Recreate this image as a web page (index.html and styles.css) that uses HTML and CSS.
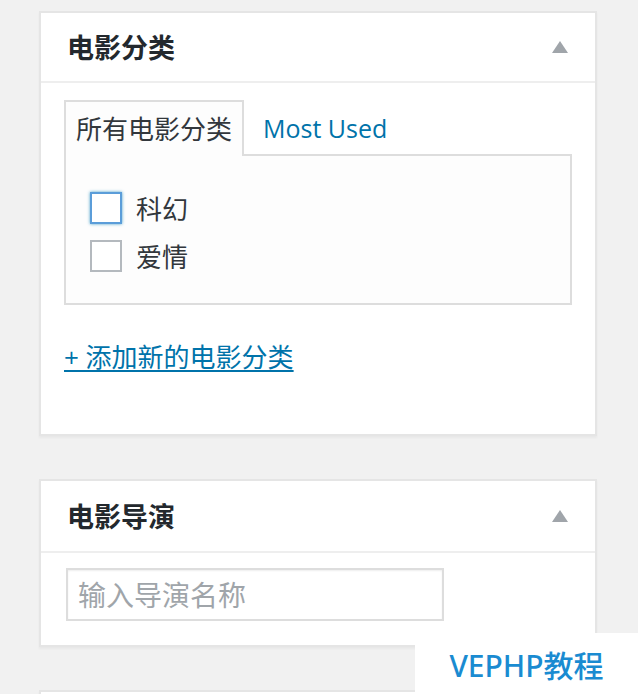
FILE: index.html
```html
<!DOCTYPE html>
<html lang="zh-CN">
<head>
    <meta charset="UTF-8">
    <meta name="viewport" content="width=device-width, initial-scale=1.0">
    <title>电影分类</title>
    <link rel="stylesheet" href="styles.css">
</head>
<body>

    <div class="postbox">
        <div class="hndle">
            <h2>电影分类</h2>
            <span class="toggle"></span>
        </div>
        <div class="inside">
            <ul class="tabs">
                <li class="tab active">所有电影分类</li>
                <li class="tab"><a href="#">Most Used</a></li>
            </ul>
            <div class="panel">
                <label class="item"><input type="checkbox" class="focus"> 科幻</label>
                <label class="item"><input type="checkbox"> 爱情</label>
            </div>
            <a href="#" class="add-new">+ 添加新的电影分类</a>
        </div>
    </div>

    <div class="postbox">
        <div class="hndle hndle-tall">
            <h2>电影导演</h2>
            <span class="toggle"></span>
        </div>
        <div class="inside inside-input">
            <input type="text" class="director" placeholder="输入导演名称">
        </div>
    </div>

    <div class="postbox postbox-tail"></div>

    <div class="watermark">VEPHP教程</div>

</body>
</html>
```

FILE: styles.css
```css
/* Reset */
* {
    margin: 0;
    padding: 0;
    box-sizing: border-box;
}

body {
    font-family: "Open Sans", "Noto Sans CJK SC", sans-serif;
    background-color: #f1f1f1;
    color: #32373c;
    padding: 11px 0 0 39px;
    overflow: hidden;
    height: 694px;
}

/* Meta boxes */
.postbox {
    width: 558px;
    background-color: #fff;
    border: 2px solid #e5e5e5;
    box-shadow: 0 2px 2px rgba(0, 0, 0, 0.04);
    margin-bottom: 43px;
}

.hndle {
    height: 70px;
    display: flex;
    align-items: center;
    justify-content: space-between;
    padding: 0 27px 0 26px;
    border-bottom: 2px solid #eee;
}

.hndle-tall {
    height: 72px;
}

.hndle h2 {
    font-size: 27px;
    font-weight: 600;
    color: #23282d;
    line-height: 1;
}

.toggle {
    width: 0;
    height: 0;
    border-left: 8px solid transparent;
    border-right: 8px solid transparent;
    border-bottom: 12px solid #a0a5aa;
}

.inside {
    padding: 17px 23px 59px;
}

/* Tabs */
.tabs {
    list-style: none;
    display: flex;
    align-items: stretch;
    height: 54px;
    font-size: 26px;
}

.tab {
    display: flex;
    align-items: center;
    padding: 0 10px;
    margin-bottom: -2px;
    position: relative;
}

.tab.active {
    border: 2px solid #ddd;
    border-bottom: none;
    background-color: #fdfdfd;
    color: #32373c;
    padding-bottom: 2px;
}

.tab a {
    color: #0073aa;
    text-decoration: none;
    font-size: 25px;
    padding-left: 9px;
}

.panel {
    height: 151px;
    border: 2px solid #ddd;
    background-color: #fdfdfd;
    padding: 36px 24px 0;
    display: flex;
    flex-direction: column;
    gap: 16px;
}

.item {
    display: flex;
    align-items: center;
    gap: 14px;
    height: 32px;
    font-size: 26px;
    color: #32373c;
}

.item input {
    appearance: none;
    width: 32px;
    height: 32px;
    border: 2px solid #b4b9be;
    background-color: #fff;
    margin: 0;
}

.item input.focus {
    border-color: #5b9dd9;
    box-shadow: 0 0 3px rgba(30, 140, 190, 0.8);
}

.add-new {
    display: inline-block;
    margin-top: 34px;
    font-size: 26px;
    line-height: 36px;
    color: #0073aa;
    text-decoration: underline;
    text-underline-offset: 3px;
    text-decoration-thickness: 2px;
}

/* Director box */
.inside-input {
    padding: 15px 0 24px 25px;
}

.director {
    width: 378px;
    height: 53px;
    border: 2px solid #ddd;
    box-shadow: inset 0 1px 2px rgba(0, 0, 0, 0.07);
    padding: 0 10px;
    font-family: "Open Sans", "Noto Sans CJK SC", sans-serif;
    font-size: 28px;
    outline: none;
}

.director::placeholder {
    color: #a0a5aa;
}

.postbox-tail {
    height: 120px;
}

/* Watermark */
.watermark {
    position: fixed;
    right: 0;
    bottom: 0;
    width: 223px;
    height: 61px;
    background-color: #fff;
    display: flex;
    align-items: center;
    justify-content: center;
    font-family: "Noto Sans", "Noto Sans CJK SC", sans-serif;
    font-size: 30px;
    font-weight: 500;
    color: #1a8bd1;
}
```
